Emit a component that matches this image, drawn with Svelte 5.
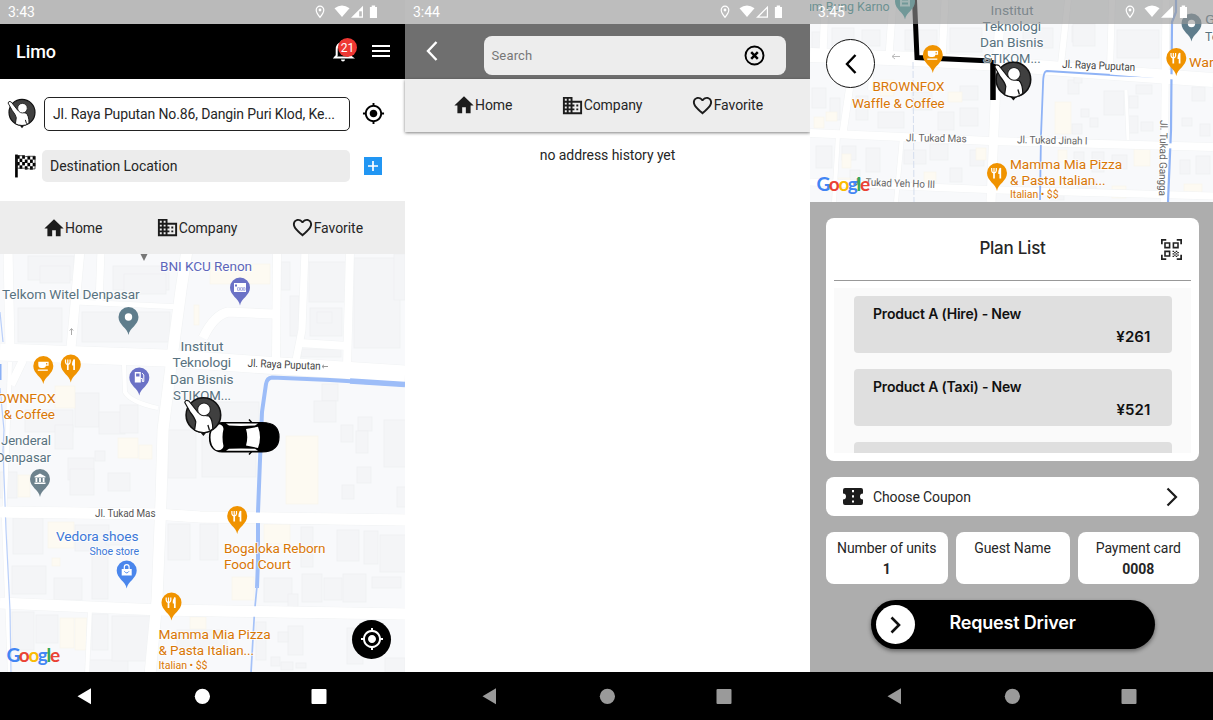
<script>
  const road1 = [
    ['M0 352 L165 358 L250 364 L405 374', 17],
    ['M8 250 L10 350', 9],
    ['M80 250 L71 348', 9],
    ['M101 250 L99 305', 7],
    ['M76 302 L182 307', 5],
    ['M187 250 L181 290 L173 350 L163 430 L161 500 L157 600 L150 675', 11],
    ['M277 250 L276 362', 8],
    ['M305 250 L302 330 L296 360', 7],
    ['M350 250 L347 368', 8],
    ['M300 343 L348 346', 8],
    ['M274 314 L228 312 Q214 315 203 338', 9],
    ['M23 360 L11 385', 8],
    ['M0 512 L155 514 L200 517 L405 520', 11],
    ['M0 603 L160 610 L405 614', 11],
    ['M90 608 L87 675', 4],
    ['M124 365 L125 392 Q130 402 158 408', 4],
    ['M10 362 L7 450 L4 520 L10 675', 4]
  ];
  const blocks1 = [
    [28, 256, 46, 24], [40, 266, 30, 17], [113, 266, 56, 24], [124, 274, 42, 20], [18, 308, 44, 34], [82, 312, 88, 30],
    [281, 262, 9, 28], [290, 296, 9, 40], [309, 262, 38, 40], [310, 308, 32, 28], [317, 312, 15, 11], [354, 258, 46, 90], [394, 254, 11, 46], [301, 349, 40, 8],
    [75, 393, 24, 34], [99, 412, 26, 22], [120, 405, 18, 28], [68, 458, 26, 22], [95, 451, 10, 10], [25, 410, 48, 22], [55, 425, 18, 24],
    [322, 384, 16, 17], [314, 401, 22, 21], [358, 417, 14, 14], [341, 425, 12, 17], [356, 431, 12, 22], [384, 420, 24, 47], [357, 467, 14, 16], [342, 485, 12, 14], [397, 487, 10, 20],
    [205, 402, 54, 24], [202, 428, 54, 49], [168, 430, 28, 48],
    [0, 472, 17, 26], [70, 469, 24, 26], [108, 473, 22, 18], [13, 518, 30, 36], [75, 525, 34, 26], [106, 535, 24, 10], [92, 555, 16, 44],
    [12, 566, 34, 28], [54, 578, 28, 22], [36, 615, 22, 28], [12, 612, 22, 38], [92, 614, 16, 36], [86, 660, 42, 14], [112, 616, 38, 45], [168, 524, 22, 36], [200, 524, 18, 36],
    [337, 530, 22, 31], [364, 531, 14, 33], [380, 535, 26, 37], [301, 527, 12, 40], [302, 574, 20, 28], [324, 578, 18, 22], [343, 574, 23, 28], [372, 577, 29, 11], [264, 578, 28, 24], [288, 594, 10, 13],
    [288, 626, 15, 29], [278, 632, 10, 10], [256, 622, 10, 38], [271, 657, 9, 9], [281, 662, 12, 8], [296, 663, 10, 5], [347, 628, 16, 36], [385, 658, 20, 14], [177, 630, 50, 20]
  ];
  const yellow1 = [
    [55, 386, 20, 22], [286, 436, 32, 68], [139, 445, 13, 14], [48, 522, 26, 26], [18, 475, 12, 22], [264, 524, 26, 20], [232, 577, 22, 23], [60, 618, 14, 30], [75, 618, 12, 32], [210, 264, 60, 20], [52, 558, 8, 8], [194, 305, 5, 20], [118, 438, 20, 20], [190, 617, 16, 12]
  ];
  const road3 = [
    ['M810 55 L915 59 L1000 64 L1100 72 L1213 80', 14],
    ['M825 0 L823 55', 7], ['M893 0 L889 56', 7], ['M945 0 L942 60', 7],
    ['M1000 20 L996 80 L991 202', 9],
    ['M1068 0 L1061 64', 6], ['M1112 0 L1110 70', 6], ['M1166 0 L1164 202', 7],
    ['M810 133 L880 136 L990 141 L1213 147', 8],
    ['M810 182 L900 186 L1000 190 L1213 196', 7],
    ['M843 133 L850 85', 7], ['M902 137 L896 202', 4], ['M838 135 L834 202', 4], ['M872 62 L870 90', 4],
    ['M1128 140 L1126 90', 3]
  ];
  const blocks3 = [
    [832, 28, 22, 18], [862, 30, 18, 16], [905, 30, 32, 20], [950, 28, 32, 24], [812, 32, 10, 16], [1023, 28, 30, 20], [1072, 26, 14, 16], [1073, 24, 22, 22], [1117, 30, 42, 28],
    [812, 88, 14, 20], [830, 98, 10, 22], [856, 96, 12, 24], [878, 112, 26, 16], [912, 92, 20, 18], [938, 112, 16, 18], [960, 108, 18, 18], [960, 86, 18, 14],
    [816, 146, 16, 22], [842, 146, 14, 14], [866, 148, 14, 24], [904, 150, 22, 14], [930, 144, 18, 16], [950, 168, 12, 14], [970, 150, 14, 16], [850, 170, 10, 10],
    [1068, 80, 11, 14], [1074, 76, 8, 7], [1104, 91, 20, 24], [1129, 96, 9, 12], [1136, 85, 16, 9], [1081, 109, 8, 8], [1090, 118, 8, 9], [1072, 124, 10, 10], [1128, 116, 10, 17], [1141, 122, 12, 9],
    [1192, 87, 13, 14], [1182, 118, 10, 8], [1200, 124, 10, 12], [1074, 152, 10, 12], [1092, 152, 12, 20], [1112, 155, 15, 14], [1050, 190, 14, 10], [1078, 182, 18, 10], [1180, 160, 10, 14], [1196, 156, 14, 18]
  ];
  const yellow3 = [
    [814, 117, 10, 11], [826, 112, 11, 9], [842, 154, 9, 14], [880, 80, 14, 16], [948, 92, 14, 10], [1055, 102, 16, 32], [1134, 148, 16, 18], [1058, 150, 9, 12], [1112, 186, 14, 12], [1184, 184, 18, 10], [976, 148, 10, 12], [924, 172, 12, 12], [838, 178, 12, 8]
  ];
  const plans = [
    { name: 'Product A (Hire) - New', price: '¥261' },
    { name: 'Product A (Taxi) - New', price: '¥521' }
  ];
</script>

{#snippet status(time, full)}
  <div class="status">
    <span>{time}</span>
    <svg class="sicons" width="70" height="24" viewBox="0 0 70 24">
      <path d="M10 6.2a3.8 3.8 0 0 0-3.8 3.9c0 2.8 3.8 7.2 3.8 7.2s3.8-4.400 3.800-7.200A3.800 3.800 0 0 0 10 6.200z" fill="none" stroke="#fff" stroke-width="1.200" />
      <circle cx="10" cy="10" r="1.400" fill="#fff" />
      <path d="M24.500 8.200Q32 2.800 39.500 8.200L32 17z" fill="#fff" />
      <path d="M53 5.700V17.700H41z" fill="#fff" />
      {#if !full}<path d="M49.200 11.300h2.600v5.100h-2.600z" fill="#bbb" />{/if}
      {#if full === 'thin'}<path d="M44.200 16.400l7.600-7.600v7.600z" fill="#bdbdbd" />{/if}
      <path d="M59.900 7h1.800V5.400h3.400V7h1.900v11h-7.100z" fill="#fff" />
    </svg>
  </div>
{/snippet}

{#snippet nav(color)}
  <div class="nav">
    <svg width="403" height="48" viewBox="0 0 403 48" fill={color}>
      <path d="M77.500 24.300L91 16.300V32.300z" />
      <circle cx="202.400" cy="24.300" r="7.600" />
      <rect x="311.500" y="17" width="15" height="15" rx="1" />
    </svg>
  </div>
{/snippet}

{#snippet tabs(kind)}
  <div class="tabs {kind}">
    <span><svg width="22" height="22" viewBox="0 0 24 24"><path d="M10 21v-6.500h4V21h5.200v-8.500H22.500L12 2.500 1.500 12.500h3.300V21z" /></svg>Home</span>
    <span><svg width="23" height="23" viewBox="0 0 24 24"><path d="M12 7V3H2v18h20V7H12zM6 19H4v-2h2v2zm0-4H4v-2h2v2zm0-4H4V9h2v2zm0-4H4V5h2v2zm4 12H8v-2h2v2zm0-4H8v-2h2v2zm0-4H8V9h2v2zm0-4H8V5h2v2zm10 12h-8v-2h2v-2h-2v-2h2v-2h-2V9h8v10zm-2-8h-2v2h2v-2zm0 4h-2v2h2v-2z" /></svg>Company</span>
    <span><svg width="23" height="23" viewBox="0 0 24 24"><path d="M16.500 3c-1.740 0-3.410.81-4.500 2.090C10.910 3.810 9.240 3 7.500 3 4.420 3 2 5.420 2 8.500c0 3.780 3.400 6.860 8.550 11.540L12 21.350l1.450-1.320C18.600 15.360 22 12.280 22 8.500 22 5.420 19.580 3 16.500 3zm-4.400 15.550l-.1.100-.1-.100C7.140 14.240 4 11.390 4 8.500 4 6.500 5.500 5 7.500 5c1.540 0 3.040.99 3.570 2.360h1.870C13.460 5.990 14.960 5 16.500 5c2 0 3.500 1.500 3.500 3.500 0 2.890-3.140 5.740-7.900 10.050z" /></svg>Favorite</span>
  </div>
{/snippet}

{#snippet personShape()}
  <path d="M-3.800 16.500L0 21 3.800 16.500z" fill="#111" />
  <circle r="17.300" fill="#404040" stroke="#111" stroke-width="1.600" />
  <path d="M-18.600 -12.500Q-18 -15.800 -14.500 -14L-5.800 -3Q0 .8 5.500 1Q9.200 4 9.400 14Q4.500 18 0 17.500Q-5 17.300-8.800 15.200L-7.600 7Q-8.500 3-13 -2.500z" fill="#fff" stroke="#111" stroke-width="1.200" stroke-linejoin="round" />
  <path d="M4.500 10L6 15" stroke="#111" stroke-width="1.300" />
  <circle cx=".6" cy="-5.600" r="6.400" fill="#fff" stroke="#222" stroke-width="1.100" />
{/snippet}

{#snippet locate(size, color)}
  <svg width={size} height={size} viewBox="0 0 24 24" fill={color}><path d="M12 8c-2.210 0-4 1.790-4 4s1.790 4 4 4 4-1.790 4-4-1.790-4-4-4zm8.940 3c-.46-4.170-3.770-7.480-7.940-7.940V1h-2v2.060C6.830 3.520 3.520 6.830 3.060 11H1v2h2.060c.46 4.170 3.770 7.480 7.940 7.940V23h2v-2.060c4.170-.46 7.480-3.770 7.940-7.940H23v-2h-2.060zM12 19c-3.870 0-7-3.130-7-7s3.130-7 7-7 7 3.130 7 7-3.130 7-7 7z" /></svg>
{/snippet}

{#snippet pin(x, y, color, kind)}
  <g transform="translate({x} {y})">
    <path d="M0 18C-1 11-10 8-10 0A10 10 0 1 1 10 0C10 8 1 11 0 18z" fill={color} />
    {#if kind === 'dot'}
      <circle r="3.700" fill="#fff" />
    {:else if kind === 'fork'}
      <path d="M-3 -.6V5.500M3.300 -5V5.500" stroke="#fff" stroke-width="1.700" />
      <path d="M-5.300 -5V-2.500Q-5 0-3 0T-.7 -2.500V-5M-3 -5V0" stroke="#fff" stroke-width="1.200" fill="none" />
      <path d="M3.500 -5.500Q.8 -3.500 1.300 1H3.800z" fill="#fff" />
    {:else if kind === 'cup'}
      <path d="M-5 -4.300H5.300V-.3H2.700Q2.500 2-.2 2H-2Q-5 2-5 -1zM2.800 -3V-1.500H4V-3z" fill="#fff" fill-rule="evenodd" />
      <path d="M-5.500 3.500H4.500V4.800H-5.500z" fill="#fff" />
    {:else if kind === 'fuel'}
      <path d="M-4.500 -5.500H1.500V5H-4.500zM-3.200 -4V-1H.2V-4z" fill="#fff" fill-rule="evenodd" />
      <path d="M1.500 1H3V4H4.500V-2.500L2.700 -4.500" stroke="#fff" fill="none" />
    {:else if kind === 'bank'}
      <path d="M-5.500 -2.500L0 -5.500 5.500 -2.500V-1.500H-5.500zM-4.500 -1H-2.700V3H-4.500zM-.9 -1H.9V3H-.9zM2.700 -1H4.500V3H2.700zM-5.500 3.500H5.500V5H-5.500z" fill="#fff" />
    {:else if kind === 'bag'}
      <path d="M-5 -1.500H5V5H-5z" fill="#fff" /><path d="M-2.400 -1V-3.500A2.400 2.400 0 0 1 2.400 -3.500V-1" stroke="#fff" stroke-width="1.200" fill="none" />
      <path d="M-2.300 .8Q0 4 2.300 .8" stroke={color} fill="none" />
    {:else if kind === 'atm'}
      <path d="M-6 -4.500H6V4.500H-6z" fill="#fff" /><path d="M-5 -3H-3V-1H-5z" fill={color} />
      <path d="M-2.500 .2H-.5V2.800H-2.500zM.5 .2H2.500V2.800H.5zM3.300 .2H5V2.800H3.300z" fill="none" stroke="#9aa0dc" stroke-width=".8" />
    {:else}
      <path d="M-5 -5H5V5H-5zM-3 -3V-1H3V-3zM-3 1V3H3V1z" fill="#b4e4e2" fill-rule="evenodd" />
    {/if}
  </g>
{/snippet}

{#snippet label(x, y, w, text, color, size = 13.2)}
  <text {x} y={y - 0.3} textLength={w} lengthAdjust="spacingAndGlyphs" fill={color} font-size={size}>{text}</text>
{/snippet}

{#snippet google(x, y)}
  <text {x} {y} class="google" textLength="53.500" lengthAdjust="spacing"><tspan fill="#4285f4">G</tspan><tspan fill="#ea4335">o</tspan><tspan fill="#fbbc04">o</tspan><tspan fill="#4285f4">g</tspan><tspan fill="#34a853">l</tspan><tspan fill="#ea4335">e</tspan></text>
{/snippet}

{#snippet ground(blocks, yellows, roads)}
  {#each blocks as b}<rect x={b[0]} y={b[1]} width={b[2]} height={b[3]} fill="#f4f5f7" stroke="#edeff1" stroke-width=".7" />{/each}
  {#each yellows as b}<rect x={b[0]} y={b[1]} width={b[2]} height={b[3]} fill="#fdfaf2" stroke="#f7f3ea" stroke-width=".6" />{/each}
  {#each roads as r}<path d={r[0]} fill="none" stroke="#f1f3f4" stroke-width={r[1] + 1.2} />{/each}
  {#each roads as r}<path d={r[0]} fill="none" stroke="#fff" stroke-width={r[1]} />{/each}
{/snippet}

<div class="screens">
  <section class="phone">
    {@render status('3:43', false)}
    <header class="appbar">
      <h1>Limo</h1>
      <div class="bell">
        <svg width="24" height="24" viewBox="0 0 24 24"><path d="M12 22.500c1.100 0 2-.9 2-2h-4c0 1.100.9 2 2 2z" fill="#fff" /><path d="M4 18.500L5.700 16.500V10.500Q5.700 5 10.500 4V3Q12 1 13.500 3V4Q18.300 5 18.300 10.500V16.500L21 18.500z" fill="none" stroke="#fff" stroke-width="2" /></svg>
        <b>21</b>
      </div>
      <svg width="18" height="14" viewBox="0 0 18 14"><path d="M0 2H18M0 7H18M0 12H18" stroke="#fff" stroke-width="2" /></svg>
    </header>
    <div class="form">
      <div class="row">
        <svg class="who" width="30" height="31" viewBox="-20 -19 40 41">{@render personShape()}</svg>
        <div class="field outlined"><span>Jl. Raya Puputan No.86, Dangin Puri Klod, Ke...</span></div>
        {@render locate(23, '#000')}
      </div>
      <div class="row second">
        <svg class="flag" width="21" height="24" viewBox="0 0 22 24"><path d="M1.500 0V24" stroke="#000" stroke-width="2.800" />
          {#each [0, 1, 2, 3] as r}{#each [0, 1, 2, 3, 4, 5, 6] as c}{#if (r + c) % 2 === 0}<rect x={2 + c * 2.75} y={0.8 + r * 3.5 + (c > 2 ? 0.9 : 0)} width="2.900" height="3.600" />{/if}{/each}{/each}
          <path d="M2 1.200H8Q11 2.800 14 1.800H21V15Q15 15.500 10 14.300H2z" fill="none" stroke="#222" stroke-width=".8" /></svg>
        <div class="field filled"><span>Destination Location</span></div>
        <svg width="18" height="18" viewBox="0 0 18 18"><rect width="18" height="18" fill="#2196f3" /><path d="M9 4V14M4 9H14" stroke="#fff" stroke-width="1.700" /></svg>
      </div>
    </div>
    {@render tabs('first')}
    <div class="map">
      <svg width="405" height="419" viewBox="0 254 405 419">
        <rect y="253" width="405" height="420" fill="#f8f9fb" />
        {@render ground(blocks1, yellow1, road1)}
        <path d="M0 312L3 342M0 388L4 430 3 450 6 530 10 610 11 673" fill="none" stroke="#b9cffa" stroke-width="1.200" />
        <path d="M0 364H1.500V380H0z" fill="#8ab0f6" />
        <path d="M405 384.500L330 380 272 377.500Q267 378 266 384L262 412 260 460 258 512 258 560 257 588" fill="none" stroke="#9dbdf8" stroke-width="4" />
        <path d="M405 384.500L350 381" stroke="#9dbdf8" stroke-width="5.500" />
        <path d="M257 586L254.500 612 251 673" fill="none" stroke="#a5c2f8" stroke-width="1.700" />
        <path d="M0 512L155 514 200 517 405 520M160 610L405 614" fill="none" stroke="#fff" stroke-width="10.500" />
        <path d="M140.500 254H147.500L144 261z" fill="#777" />
        <path d="M71.500 335V329M69.800 330.500L71.500 328.500 73.200 330.500" stroke="#aaa" fill="none" />
        {@render pin(240, 287.5, '#6b72c6', 'atm')}
        {@render pin(128.5, 317, '#5f7d8c', 'dot')}
        {@render pin(43.3, 366, '#f09300', 'cup')}
        {@render pin(70.8, 364.5, '#f09300', 'fork')}
        {@render pin(139.3, 377.5, '#6b72c6', 'fuel')}
        {@render pin(40, 479, '#6d828d', 'bank')}
        {@render pin(237.2, 516, '#f09300', 'fork')}
        {@render pin(126.7, 570.5, '#4a86ec', 'bag')}
        {@render pin(171.5, 602.5, '#f09300', 'fork')}
        <g class="halo">
          {@render label(160, 271, 92, 'BNI KCU Renon', '#5c66bb')}
          {@render label(2, 299.5, 137.5, 'Telkom Witel Denpasar', '#587280')}
          {@render label(180.5, 351.5, 43, 'Institut', '#587280')}
          {@render label(172.5, 367.5, 58.5, 'Teknologi', '#587280')}
          {@render label(170, 384, 63.5, 'Dan Bisnis', '#587280')}
          {@render label(173, 400, 58, 'STIKOM...', '#587280')}
          {@render label(-20.5, 403, 76, 'BROWNFOX', '#d97706')}
          {@render label(3.5, 419.5, 51.5, '& Coffee', '#d97706')}
          {@render label(1, 445.5, 50, 'Jenderal', '#587280')}
          {@render label(-4, 462, 55, 'Denpasar', '#587280')}
          {@render label(95, 517.5, 60.5, 'Jl. Tukad Mas', '#555', 10.5)}
          {@render label(56, 541.5, 82.5, 'Vedora shoes', '#3c78d8')}
          {@render label(89.5, 555, 49.5, 'Shoe store', '#3c78d8', 10.5)}
          {@render label(224, 553, 101.5, 'Bogaloka Reborn', '#d97706')}
          {@render label(224, 569, 67, 'Food Court', '#d97706')}
          {@render label(158.5, 639.5, 112, 'Mamma Mia Pizza', '#d97706')}
          {@render label(158.5, 655.5, 95.5, '& Pasta Italian...', '#d97706')}
          {@render label(158.5, 669, 49, 'Italian • $$', '#d97706', 10.5)}
          <g transform="rotate(2.400 247 367)">{@render label(247.5, 367, 73, 'Jl. Raya Puputan', '#444', 11)}</g>
        </g>
        <path d="M328 366.500H322M324 364.800L322 366.500 324 368.200" stroke="#999" fill="none" />
        {@render google(6.5, 661.5)}
        <g>
          <path d="M249 419.500L253 424M249 454.500L253 450" stroke="#000" stroke-width="1.500" />
          <path d="M222 422.500H262Q279 422.500 279 437T262 452H222Q209.500 451 209.500 437.500T222 422.500z" fill="#000" stroke="#000" stroke-width="1.200" />
          <path d="M216 424.500Q223 423.500 223.500 429Q221.500 437 223.500 446Q223 451 216 450Q210.500 446 210.500 437.500T216 424.500z" fill="#fff" />
          <path d="M226 423.600H258L255 425.600Q240 426.500 229 425.600zM226 450.800H258L255 448.800Q240 448 229 448.800z" fill="#fff" />
          <path d="M246 429L258 426.800Q262 437 258 448L246 445.500Q248.500 437 246 429z" fill="#fff" />
        </g>
        <g transform="translate(203.400 415)">{@render personShape()}</g>
      </svg>
      <div class="fab">{@render locate(24, '#fff')}</div>
    </div>
    {@render nav('#fff')}
  </section>

  <section class="phone">
    {@render status('3:44', 'thin')}
    <header class="searchbar">
      <svg width="14" height="22" viewBox="0 0 14 22"><path d="M11.500 2L3 11l8.500 9" fill="none" stroke="#fff" stroke-width="2.400" /></svg>
      <div class="search"><span>Search</span>
        <svg width="21" height="21" viewBox="0 0 21 21" fill="none" stroke="#000"><circle cx="10.500" cy="10.500" r="9" stroke-width="1.900" /><path d="M7.200 7.200l6.600 6.600M13.800 7.200l-6.600 6.600" stroke-width="2.500" /></svg>
      </div>
    </header>
    {@render tabs('second')}
    <p class="empty"><span>no address history yet</span></p>
    {@render nav('#9a9a9a')}
  </section>

  <section class="phone last">
    <div class="map top">
      <svg width="403" height="202" viewBox="810 0 403 202">
        <rect x="810" width="403" height="202" fill="#f8f9fb" />
        {@render ground(blocks3, yellow3, road3)}
        <path d="M913 62L914 202" stroke="#d5deee" stroke-width="1" stroke-dasharray="7 2" />
        <path d="M1040 200L1041 135 1043 85Q1043 71 1047 71L1120 75.500 1172 77" fill="none" stroke="#8fb3f6" stroke-width="1.800" />
        <path d="M1176 0V12L1172 22 1171 130 1168 202" fill="none" stroke="#8fb3f6" stroke-width="2.200" />
        <path d="M810 133L990 141 1213 147M1110 72L1213 80" fill="none" stroke="#fff" stroke-width="5" />
        <path d="M914.500 0L917 57.500 992 61" fill="none" stroke="#000" stroke-width="5" />
        <path d="M993 60V100" fill="none" stroke="#000" stroke-width="5.500" />
        <path d="M900 56.500H892M895 54L892 56.500 895 59" stroke="#bbb" fill="none" />
        {@render pin(932.8, 55, '#f09300', 'cup')}
        {@render pin(905, 1.5, '#3b9c9c', 'hotel')}
        {@render pin(997, 173, '#f09300', 'fork')}
        {@render pin(1191.5, 23.5, '#5f7d8c', 'dot')}
        {@render pin(1176.3, 58, '#f09300', 'fork')}
        <g class="halo">
          {@render label(777, 11, 112.5, 'Stadium Bung Karno', '#2b8a8a')}
          {@render label(990.5, 15, 43, 'Institut', '#587280')}
          {@render label(982.5, 31, 58.5, 'Teknologi', '#587280')}
          {@render label(980, 47, 63.5, 'Dan Bisnis', '#587280')}
          {@render label(983.5, 63.5, 57, 'STIKOM...', '#587280')}
          {@render label(872.5, 91.5, 72, 'BROWNFOX', '#d97706')}
          {@render label(852, 108, 92.5, 'Waffle & Coffee', '#d97706')}
          {@render label(1010, 169, 112, 'Mamma Mia Pizza', '#d97706')}
          {@render label(1010, 185.5, 95.5, '& Pasta Italian...', '#d97706')}
          {@render label(1010, 198.5, 48.5, 'Italian • $$', '#d97706', 10.5)}
          {@render label(1189, 67, 48, 'Warung', '#d97706')}
          {@render label(1205, 24, 40, 'Grand', '#587280')}
          {@render label(1205, 41, 40, 'Telkom', '#587280')}
          <g transform="rotate(1 906 141)">{@render label(906, 141.5, 60.5, 'Jl. Tukad Mas', '#666', 10.5)}</g>
          <g transform="rotate(1 1016 143)">{@render label(1017, 143.5, 70.5, 'Jl. Tukad Jinah I', '#666', 10.5)}</g>
          <g transform="rotate(2 852 186)">{@render label(853, 185.5, 82, 'Jl. Tukad Yeh Ho III', '#666', 10.5)}</g>
          <g transform="rotate(2.500 1062 68)">{@render label(1062, 68, 73, 'Jl. Raya Puputan', '#444', 11)}</g>
          <g transform="translate(1160 120) rotate(91)">{@render label(0, 0, 76, 'Jl. Tukad Gangga', '#666', 10.5)}</g>
        </g>
        {@render google(816.5, 190.5)}
        <g transform="translate(1013.400 79.500)">{@render personShape()}</g>
      </svg>
      <div class="over">{@render status('3:45', true)}</div>
      <div class="back"><svg width="14" height="22" viewBox="0 0 14 22"><path d="M11.500 2L3 11l8.500 9" fill="none" stroke="#000" stroke-width="2.400" /></svg></div>
    </div>
    <div class="order">
      <div class="card plan">
        <div class="planhead">
          <h2>Plan List</h2>
          <svg width="21" height="21" viewBox="0 0 20 20" fill="none" stroke="#222" stroke-width="1.500"><path d="M.8 5V.8H5M15 .8h4.200V5M.8 15v4.200H5M15 19.200h4.200V15" stroke-width="1.700" /><path d="M3.800 3.800h4.400v4.400H3.800zM11.800 3.800h4.400v4.400h-4.400zM3.800 11.800h4.400v4.400H3.800z" /><path d="M11 11.800h6M11 14.200h6" stroke-dasharray="1.500 1.500" stroke-width="1.200" /><path d="M12.500 13h5M12.500 15.400h5M11 16.600h5" stroke-dasharray="1.500 1.500" stroke-width="1.200" /></svg>
        </div>
        <div class="list">
          {#each plans as p}
            <div class="item"><strong>{p.name}</strong><em>{p.price}</em></div>
          {/each}
          <div class="item"></div>
        </div>
      </div>
      <div class="card coupon">
        <svg width="20" height="17" viewBox="0 0 20 17"><path d="M2 0H18Q20 0 20 2V5.500A3 3 0 0 0 20 11.500V15Q20 17 18 17H2Q0 17 0 15V11.500A3 3 0 0 0 0 5.500V2Q0 0 2 0z" fill="#1c1c1c" /><path d="M10 2V15" stroke="#fff" stroke-width="2" stroke-dasharray="2.200 3" /></svg>
        <span>Choose Coupon</span>
        <svg width="12" height="20" viewBox="0 0 12 20"><path d="M1.500 1.500L10 10l-8.500 8.500" fill="none" stroke="#1c1c1c" stroke-width="2.200" /></svg>
      </div>
      <div class="trio">
        <div class="card"><span>Number of units</span><b>1</b></div>
        <div class="card"><span>Guest Name</span></div>
        <div class="card"><span>Payment card</span><b>0008</b></div>
      </div>
      <div class="request">
        <i><svg width="11" height="18" viewBox="0 0 11 18"><path d="M1.500 1.500L9 9l-7.500 7.500" fill="none" stroke="#111" stroke-width="2.600" /></svg></i>
        <span>Request Driver</span>
      </div>
    </div>
    {@render nav('#9a9a9a')}
  </section>
</div>

<style>
  :global(body) { background: #fff; overflow: hidden; }
  .screens { display: flex; width: 1213px; height: 720px; font-family: Roboto, sans-serif; font-size: 14px; letter-spacing: -.06px; color: #262626; }
  .phone { width: 405px; height: 720px; display: flex; flex-direction: column; background: #fff; }
  .last { width: 403px; }
  svg { display: block; flex: none; }
  .status { height: 24px; flex: none; box-sizing: border-box; background: #bababa; color: #fff; display: flex; align-items: center; justify-content: space-between; padding: 0 25px 0 8px; font-size: 14px; }
  .appbar { height: 55px; box-sizing: border-box; flex: none; background: #000; display: flex; align-items: center; padding: 0 15px 1px 16px; }
  h1 { margin: 0; flex: 1; color: #fff; font-size: 18px; font-weight: 500; }
  .bell { position: relative; margin-right: 17px; }
  .bell b { position: absolute; left: 7px; top: -1px; width: 19px; height: 19px; border-radius: 50%; background: #ee3733; color: #fff; font-size: 12px; font-weight: 400; line-height: 20px; text-align: center; }
  .form { height: 122px; box-sizing: border-box; flex: none; padding: 17px 20px 0 7px; }
  .row { display: flex; align-items: center; height: 35px; }
  .row > svg:last-child { margin-left: auto; }
  .row > .who { margin-right: 7px; }
  .row.second { margin-top: 19px; height: 32px; padding-right: 3px; }
  .row > .flag { margin: 0 6px 0 8px; }
  .field { box-sizing: border-box; display: flex; align-items: center; white-space: nowrap; }
  .outlined { width: 306px; height: 34px; border: 1px solid #222; border-radius: 5px; padding-left: 8px; letter-spacing: -.125px; }
  .filled { width: 308px; height: 32px; border-radius: 5px; background: #ececec; padding-left: 8px; }
  .tabs { height: 53px; flex: none; background: #ededed; display: flex; align-items: center; box-sizing: border-box; font-size: 14px; padding-bottom: 1px; }
  .tabs span { display: flex; align-items: center; }
  .tabs svg { fill: #1c1c1c; }
  .tabs.first { padding: 0 42px 0 43px; justify-content: space-between; }
  .tabs.second { padding: 0 47px 1px 48px; justify-content: space-between; box-shadow: 0 1px 3px rgba(0, 0, 0, .5); }
  .map { position: relative; height: 418px; flex: none; overflow: hidden; }
  .map text { font-family: Roboto, sans-serif; }
  .halo text { paint-order: stroke; stroke: #fff; stroke-opacity: .7; stroke-width: 2px; stroke-linejoin: round; }
  .map .google { font-family: Lato, sans-serif; font-size: 19px; font-weight: 700; }
  .fab { position: absolute; left: 352px; top: 365.500px; width: 39px; height: 39px; border-radius: 50%; background: #000; display: flex; align-items: center; justify-content: center; }
  .nav { height: 48px; margin-top: auto; background: #000; flex: none; }
  .phone:nth-child(2) .status { background: #bdbdbd; }
  .searchbar { height: 55px; flex: none; box-sizing: border-box; background: #6f6f6f; display: flex; padding: 11.500px 24px 0 20px; }
  .searchbar > svg { margin: 4.500px 44.500px 0 0; }
  .search { flex: 1; height: 39px; box-sizing: border-box; border-radius: 8px; background: #ededed; display: flex; justify-content: space-between; align-items: center; padding: 0 21px 0 8px; color: #777; font-size: 13px; letter-spacing: .15px; }
  .empty { margin: 0; padding-top: 13.500px; text-align: center; line-height: 18px; }
  .top { height: 202px; }
  .over { position: absolute; inset: 0 0 auto 0; }
  .over .status { background: rgba(150, 150, 150, .6); padding-right: 23px; }
  .back { position: absolute; left: 16px; top: 39px; width: 47px; height: 47px; border: 1.200px solid #111; border-radius: 50%; background: #fff; display: flex; align-items: center; justify-content: center; }
  .order { flex: 1; background: #adadad; padding: 16px 14px 0 16px; display: flex; flex-direction: column; gap: 16px; }
  .card { background: #fff; border-radius: 8px; box-sizing: border-box; }
  .plan { height: 243px; padding: 0 8px 8px; display: flex; flex-direction: column; }
  .planhead { height: 63px; box-sizing: border-box; flex: none; border-bottom: 1px solid #999; display: grid; grid-template-columns: 30px 1fr 30px; align-items: center; }
  h2 { grid-column: 2; margin: 0; text-align: center; font: 500 17px Inter, sans-serif; letter-spacing: -.25px; padding-bottom: 3px; }
  .list { flex: 1; margin-top: 7px; overflow: hidden; background: #fafafa; padding: 8px 19.500px 0; display: flex; flex-direction: column; gap: 16px; }
  .item { height: 57px; box-sizing: border-box; flex: none; border-radius: 4px; background: #dfdfdf; padding: 9px 21px 0 19.500px; display: flex; flex-direction: column; font: 600 14px Inter, sans-serif; color: #111; }
  .item strong { font-weight: 600; letter-spacing: -.2px; line-height: 18px; }
  .item em { font-style: normal; align-self: flex-end; line-height: 18px; margin-top: 5px; font-size: 15px; letter-spacing: .1px; }
  .coupon { height: 39px; display: flex; align-items: center; padding: 0 21px 0 17px; }
  .coupon span { flex: 1; margin-left: 10px; letter-spacing: -.12px; }
  .trio { display: flex; gap: 8px; }
  .trio .card { width: 121.500px; height: 52px; display: flex; flex-direction: column; align-items: center; padding-top: 7px; line-height: 18px; gap: 3px; }
  .trio .card:nth-child(2) { width: 114px; }
  .trio b { font-weight: 700; }
  .request { width: 284px; height: 49px; box-sizing: border-box; margin-left: 44.500px; border-radius: 25px; background: #000; box-shadow: 0 2px 4px rgba(0, 0, 0, .45); display: flex; align-items: center; padding-left: 5px; color: #fff; }
  .request i { width: 39px; height: 39px; border-radius: 50%; background: #fff; display: flex; align-items: center; justify-content: center; }
  .request span { margin: -4px 0 0 35px; font: 600 18px Inter, sans-serif; letter-spacing: -.2px; }
</style>
